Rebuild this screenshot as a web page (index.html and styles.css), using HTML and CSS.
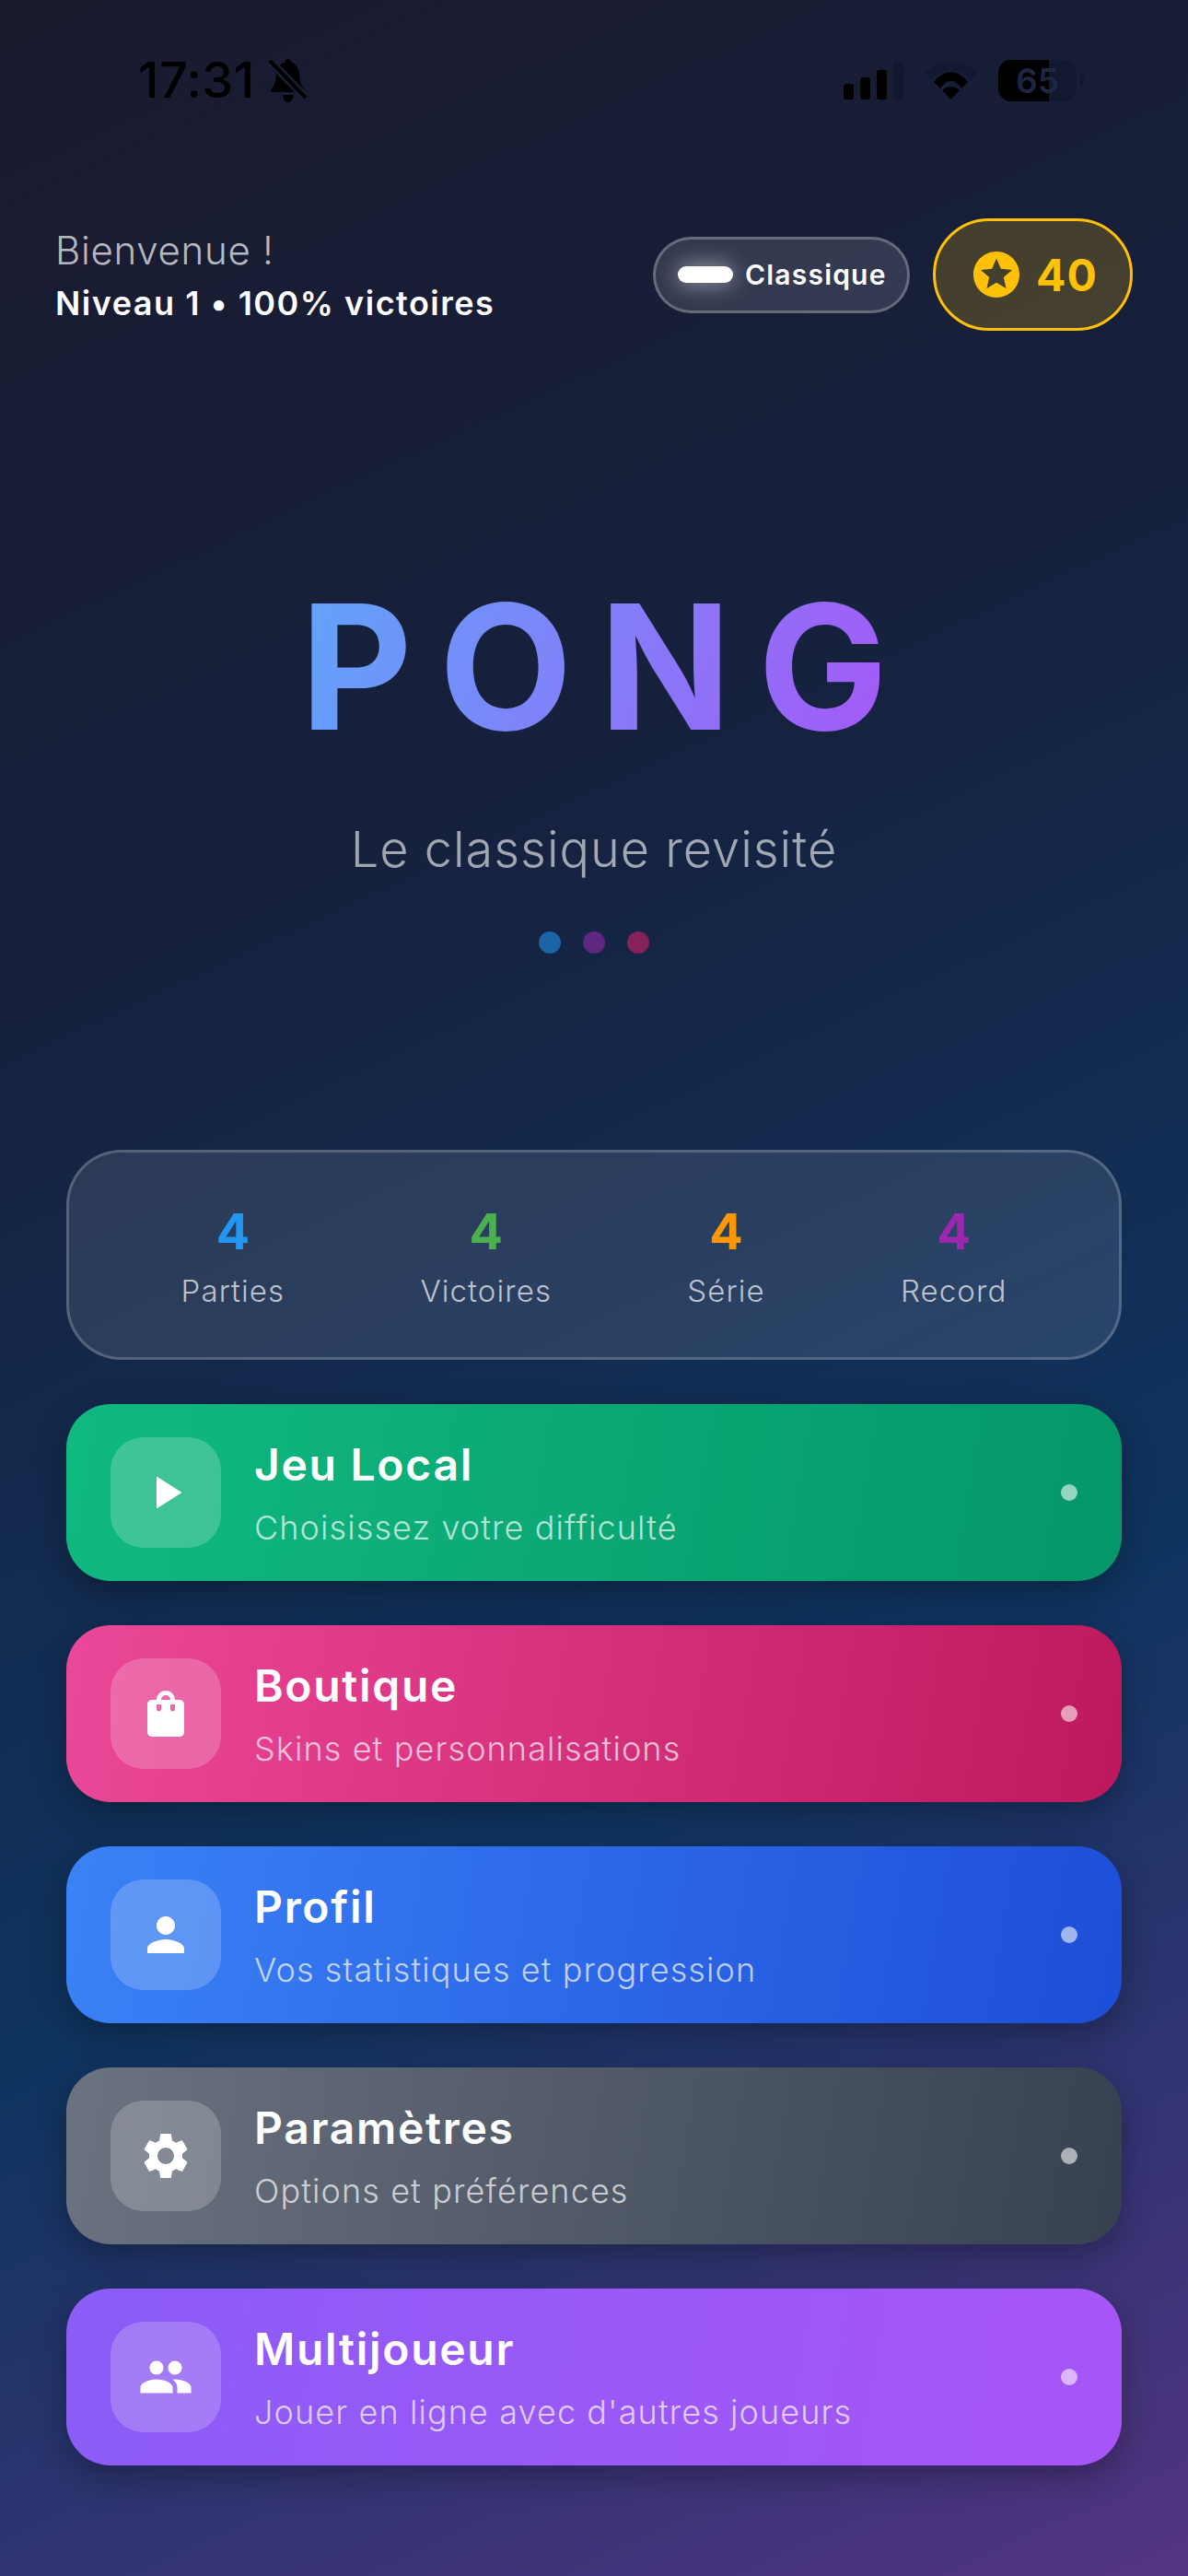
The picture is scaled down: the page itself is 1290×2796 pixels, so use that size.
FILE: index.html
```html
<!DOCTYPE html>
<html lang="fr">
<head>
  <meta charset="UTF-8" />
  <title>Pong</title>
  <link rel="stylesheet" href="styles.css">
</head>
<body>
  <div class="status-bar">
    <div class="status-left">
      <span class="time">17:31</span>
      <svg class="bell" viewBox="0 0 41 47">
        <path d="M21 0c-2 0-3.300 1.400-3.600 3.400C11.600 5 8.500 10 8 16c-.5 7-1 12-5.500 17-1 1.300-.5 3 1.500 3h33c2 0 2.500-1.700 1.500-3-4.500-5-5-10-5.500-17-.5-6-3.600-11-9.400-12.600C24.300 1.400 23 0 21 0zM15 39c.5 4.500 3 8 6 8s5.500-3.500 6-8z"/>
        <path class="bell-gap" d="M1 2l39 40"/>
        <path class="bell-slash" d="M1 2l39 40"/>
      </svg>
    </div>
    <div class="status-right">
      <div class="signal">
        <span class="bar bar-1"></span>
        <span class="bar bar-2"></span>
        <span class="bar bar-3"></span>
        <span class="bar bar-4"></span>
      </div>
      <svg class="wifi" viewBox="0 0 57 41">
        <path class="wifi-off" d="M0 12Q28.500-12 57 12L50 19Q28.500-1 7 19Z"/>
        <path d="M10 22Q28.500 0 47 22L40 29Q28.500 12 17 29Z"/>
        <path d="M28.500 41L19 31Q28.500 23 38 31Z"/>
      </svg>
      <div class="battery">
        <div class="battery-body">
          <div class="battery-fill"></div>
          <span class="battery-text">65</span>
        </div>
        <div class="battery-nub"></div>
      </div>
    </div>
  </div>

  <header class="top">
    <div class="welcome">
      <div class="welcome-hello">Bienvenue !</div>
      <div class="welcome-level">Niveau 1 • 100% victoires</div>
    </div>
    <div class="top-pills">
      <div class="skin-pill">
        <span class="skin-paddle"></span>
        <span class="skin-name">Classique</span>
      </div>
      <div class="coin-pill">
        <svg class="coin-icon" viewBox="0 0 24 24"><path d="M11.990 2C6.470 2 2 6.480 2 12s4.470 10 9.990 10C17.520 22 22 17.520 22 12S17.520 2 11.990 2zm4.240 16L12 15.450 7.770 18l1.120-4.810-3.730-3.230 4.920-.42L12 5l1.920 4.530 4.920.42-3.730 3.230L16.230 18z"/></svg>
        <span class="coin-count">40</span>
      </div>
    </div>
  </header>

  <section class="hero">
    <h1 class="logo">PONG</h1>
    <p class="tagline">Le classique revisité</p>
    <div class="hero-dots">
      <span class="hero-dot blue"></span>
      <span class="hero-dot purple"></span>
      <span class="hero-dot pink"></span>
    </div>
  </section>

  <section class="stats">
    <div class="stat">
      <div class="stat-value c-blue">4</div>
      <div class="stat-label">Parties</div>
    </div>
    <div class="stat">
      <div class="stat-value c-green">4</div>
      <div class="stat-label">Victoires</div>
    </div>
    <div class="stat">
      <div class="stat-value c-orange">4</div>
      <div class="stat-label">Série</div>
    </div>
    <div class="stat">
      <div class="stat-value c-purple">4</div>
      <div class="stat-label">Record</div>
    </div>
  </section>

  <nav class="menu">
    <div class="card card-green">
      <div class="card-icon"><svg viewBox="0 0 24 24"><path d="M8 5v14l11-7z"/></svg></div>
      <div class="card-text">
        <div class="card-title">Jeu Local</div>
        <div class="card-sub">Choisissez votre difficulté</div>
      </div>
      <span class="card-dot"></span>
    </div>
    <div class="card card-pink">
      <div class="card-icon"><svg viewBox="0 0 24 24"><path d="M18 6h-2c0-2.210-1.790-4-4-4S8 3.790 8 6H6c-1.100 0-2 .9-2 2v12c0 1.100.9 2 2 2h12c1.100 0 2-.9 2-2V8c0-1.100-.9-2-2-2zm-8 4c0 .55-.45 1-1 1s-1-.45-1-1V8h2v2zm2-6c1.100 0 2 .9 2 2h-4c0-1.100.9-2 2-2zm4 6c0 .55-.45 1-1 1s-1-.45-1-1V8h2v2z"/></svg></div>
      <div class="card-text">
        <div class="card-title">Boutique</div>
        <div class="card-sub">Skins et personnalisations</div>
      </div>
      <span class="card-dot"></span>
    </div>
    <div class="card card-blue">
      <div class="card-icon"><svg viewBox="0 0 24 24"><path d="M12 12c2.210 0 4-1.790 4-4s-1.790-4-4-4-4 1.790-4 4 1.790 4 4 4zm0 2c-2.670 0-8 1.340-8 4v2h16v-2c0-2.660-5.330-4-8-4z"/></svg></div>
      <div class="card-text">
        <div class="card-title">Profil</div>
        <div class="card-sub">Vos statistiques et progression</div>
      </div>
      <span class="card-dot"></span>
    </div>
    <div class="card card-gray">
      <div class="card-icon"><svg viewBox="0 0 24 24"><path d="M19.140 12.940c.04-.3.06-.61.06-.94 0-.32-.02-.64-.07-.94l2.030-1.580c.18-.14.23-.41.12-.61l-1.920-3.320c-.12-.22-.37-.29-.59-.22l-2.390.96c-.5-.38-1.030-.7-1.620-.94l-.36-2.540c-.04-.24-.24-.41-.48-.41h-3.840c-.24 0-.43.17-.47.41l-.36 2.540c-.59.24-1.130.57-1.620.94l-2.390-.96c-.22-.08-.47 0-.59.22L2.740 8.870c-.12.21-.08.47.12.61l2.030 1.580c-.05.3-.09.63-.09.94s.02.64.07.94l-2.030 1.580c-.18.14-.23.41-.12.61l1.920 3.320c.12.22.37.29.59.22l2.390-.96c.5.38 1.030.7 1.620.94l.36 2.540c.05.24.24.41.48.41h3.840c.24 0 .44-.17.47-.41l.36-2.540c.59-.24 1.130-.56 1.620-.94l2.390.96c.22.08.47 0 .59-.22l1.920-3.320c.12-.22.07-.47-.12-.61l-2.010-1.580zM12 15.600c-1.980 0-3.600-1.620-3.600-3.600s1.620-3.600 3.600-3.600 3.600 1.620 3.600 3.600-1.620 3.600-3.600 3.600z"/></svg></div>
      <div class="card-text">
        <div class="card-title">Paramètres</div>
        <div class="card-sub">Options et préférences</div>
      </div>
      <span class="card-dot"></span>
    </div>
    <div class="card card-violet">
      <div class="card-icon"><svg viewBox="0 0 24 24"><path d="M16 11c1.660 0 2.990-1.340 2.990-3S17.660 5 16 5c-1.660 0-3 1.340-3 3s1.340 3 3 3zm-8 0c1.660 0 2.990-1.340 2.990-3S9.660 5 8 5C6.340 5 5 6.340 5 8s1.340 3 3 3zm0 2c-2.330 0-7 1.170-7 3.500V19h14v-2.500c0-2.330-4.670-3.500-7-3.500zm8 0c-.29 0-.62.02-.97.05 1.160.84 1.970 1.970 1.970 3.450V19h6v-2.500c0-2.330-4.670-3.500-7-3.500z"/></svg></div>
      <div class="card-text">
        <div class="card-title">Multijoueur</div>
        <div class="card-sub">Jouer en ligne avec d'autres joueurs</div>
      </div>
      <span class="card-dot"></span>
    </div>
  </nav>
</body>
</html>
```

FILE: styles.css
```css
html, body {
  margin: 0;
  padding: 0;
  width: 1290px;
  height: 2796px;
  overflow: hidden;
}

body {
  background: linear-gradient(155.2deg, #1a1a2e 0%, #16213e 33.33%, #0f3460 66.67%, #533483 100%);
  font-family: Inter, "Noto Sans", sans-serif;
  color: #fff;
}

/* status bar */
.status-bar {
  height: 174px;
  padding: 0 113px 0 150px;
  box-sizing: border-box;
  display: flex;
  justify-content: space-between;
  align-items: center;
}

.status-left {
  display: flex;
  align-items: center;
  gap: 15px;
  color: #000;
}

.time {
  font-size: 54px;
  font-weight: 500;
  line-height: 60px;
  letter-spacing: 0.5px;
}

.bell {
  width: 41px;
  height: 47px;
  fill: #000;
}

.bell-gap {
  fill: none;
  stroke: #1a1d36;
  stroke-width: 9px;
}

.bell-slash {
  fill: none;
  stroke: #000;
  stroke-width: 4px;
}

.status-right {
  display: flex;
  align-items: center;
  gap: 23px;
}

.signal {
  display: flex;
  align-items: flex-end;
  gap: 7px;
  height: 41px;
}

.bar {
  width: 11px;
  background: #000;
  border-radius: 3px;
}

.bar-1 { height: 17px; }
.bar-2 { height: 24px; }
.bar-3 { height: 32px; }
.bar-4 { height: 41px; background: #111830; }

.wifi {
  width: 57px;
  height: 41px;
  fill: #000;
}

.wifi-off {
  fill: #111830;
}

.battery {
  display: flex;
  align-items: center;
  gap: 3px;
}

.battery-body {
  position: relative;
  width: 85px;
  height: 45px;
  border-radius: 14px;
  background: #111830;
  overflow: hidden;
  display: flex;
  align-items: center;
  justify-content: center;
}

.battery-fill {
  position: absolute;
  left: 0;
  top: 0;
  bottom: 0;
  width: 55px;
  background: #000;
}

.battery-text {
  position: relative;
  font-size: 37px;
  font-weight: 600;
  color: #1e2644;
}

.battery-nub {
  width: 5px;
  height: 14px;
  background: #111830;
  border-radius: 0 3px 3px 0;
}

/* header */
.top {
  margin-top: 63px;
  padding: 0 60px;
  display: flex;
  justify-content: space-between;
  align-items: center;
}

.welcome-hello {
  font-size: 42px;
  font-weight: 300;
  line-height: 51px;
  letter-spacing: 0.7px;
  color: rgba(255, 255, 255, 0.7);
}

.welcome-level {
  margin-top: 10px;
  font-size: 36px;
  font-weight: 600;
  line-height: 44px;
  letter-spacing: 1.5px;
}

.top-pills {
  display: flex;
  align-items: center;
  gap: 25px;
}

.skin-pill {
  width: 279px;
  height: 83px;
  box-sizing: border-box;
  padding-left: 24px;
  display: flex;
  align-items: center;
  gap: 13px;
  border: 3px solid rgba(255, 255, 255, 0.25);
  border-radius: 42px;
  background: rgba(255, 255, 255, 0.12);
}

.skin-paddle {
  width: 60px;
  height: 18px;
  border-radius: 9px;
  background: #fff;
  box-shadow: 0 0 24px rgba(255, 255, 255, 0.6);
}

.skin-name {
  font-size: 30px;
  font-weight: 600;
  letter-spacing: 1.2px;
}

.coin-pill {
  width: 217px;
  height: 122px;
  box-sizing: border-box;
  padding-left: 36px;
  display: flex;
  align-items: center;
  gap: 13px;
  border: 3px solid #ffc107;
  border-radius: 61px;
  background: rgba(255, 193, 7, 0.2);
}

.coin-icon {
  width: 60px;
  height: 60px;
  fill: #ffc107;
}

.coin-count {
  font-size: 48px;
  font-weight: 700;
  letter-spacing: 1px;
  color: #ffc107;
}

/* logo block */
.hero {
  margin-top: 252px;
  display: flex;
  flex-direction: column;
  align-items: center;
}

.logo {
  margin: 0 -29px 0 0;
  font-size: 188px;
  font-weight: 700;
  line-height: 225px;
  letter-spacing: 29px;
  background: linear-gradient(110deg, #60a5fa, #a855f7);
  -webkit-background-clip: text;
  background-clip: text;
  color: transparent;
}

.tagline {
  margin: 53px 0 0;
  font-size: 54px;
  font-weight: 300;
  line-height: 66px;
  letter-spacing: 1px;
  color: rgba(255, 255, 255, 0.6);
}

.hero-dots {
  margin-top: 56px;
  display: flex;
  gap: 24px;
}

.hero-dot {
  width: 24px;
  height: 24px;
  border-radius: 50%;
}

.hero-dot.blue { background: #1c64a8; }
.hero-dot.purple { background: #5e2880; }
.hero-dot.pink { background: #86215a; }

/* stats */
.stats {
  margin: 213px 72px 0;
  height: 228px;
  box-sizing: border-box;
  padding: 48px;
  display: flex;
  justify-content: space-around;
  align-items: center;
  border: 3px solid rgba(255, 255, 255, 0.2);
  border-radius: 60px;
  background: rgba(255, 255, 255, 0.1);
}

.stat {
  text-align: center;
}

.stat-value {
  font-size: 54px;
  font-weight: 700;
  line-height: 65px;
}

.stat-label {
  margin-top: 12px;
  font-size: 33px;
  font-weight: 300;
  line-height: 40px;
  letter-spacing: 1.1px;
  color: rgba(255, 255, 255, 0.7);
}

.c-blue { color: #2196f3; }
.c-green { color: #4caf50; }
.c-orange { color: #ff9800; }
.c-purple { color: #9c27b0; }

/* menu cards */
.menu {
  margin: 48px 72px 0;
  display: flex;
  flex-direction: column;
  gap: 48px;
}

.card {
  height: 192px;
  box-sizing: border-box;
  padding: 0 48px;
  display: flex;
  align-items: center;
  gap: 36px;
  border-radius: 48px;
  box-shadow: 0 12px 36px rgba(0, 0, 0, 0.3);
}

.card-green { background: linear-gradient(99.5deg, #10b981, #059669); }
.card-pink { background: linear-gradient(99.5deg, #ec4899, #be185d); }
.card-blue { background: linear-gradient(99.5deg, #3b82f6, #1d4ed8); }
.card-gray { background: linear-gradient(99.5deg, #6b7280, #374151); }
.card-violet { background: linear-gradient(99.5deg, #8b5cf6, #a855f7); }

.card-icon {
  width: 120px;
  height: 120px;
  flex: none;
  display: flex;
  align-items: center;
  justify-content: center;
  border-radius: 36px;
  background: rgba(255, 255, 255, 0.2);
}

.card-icon svg {
  width: 60px;
  height: 60px;
  fill: #fff;
}

.card-text {
  flex: 1;
}

.card-title {
  font-size: 48px;
  font-weight: 600;
  line-height: 58px;
  letter-spacing: 1.7px;
}

.card-sub {
  margin-top: 17px;
  font-size: 36px;
  font-weight: 300;
  line-height: 44px;
  letter-spacing: 1.1px;
  color: rgba(255, 255, 255, 0.7);
}

.card-dot {
  width: 18px;
  height: 18px;
  border-radius: 50%;
  background: rgba(255, 255, 255, 0.58);
}
```
